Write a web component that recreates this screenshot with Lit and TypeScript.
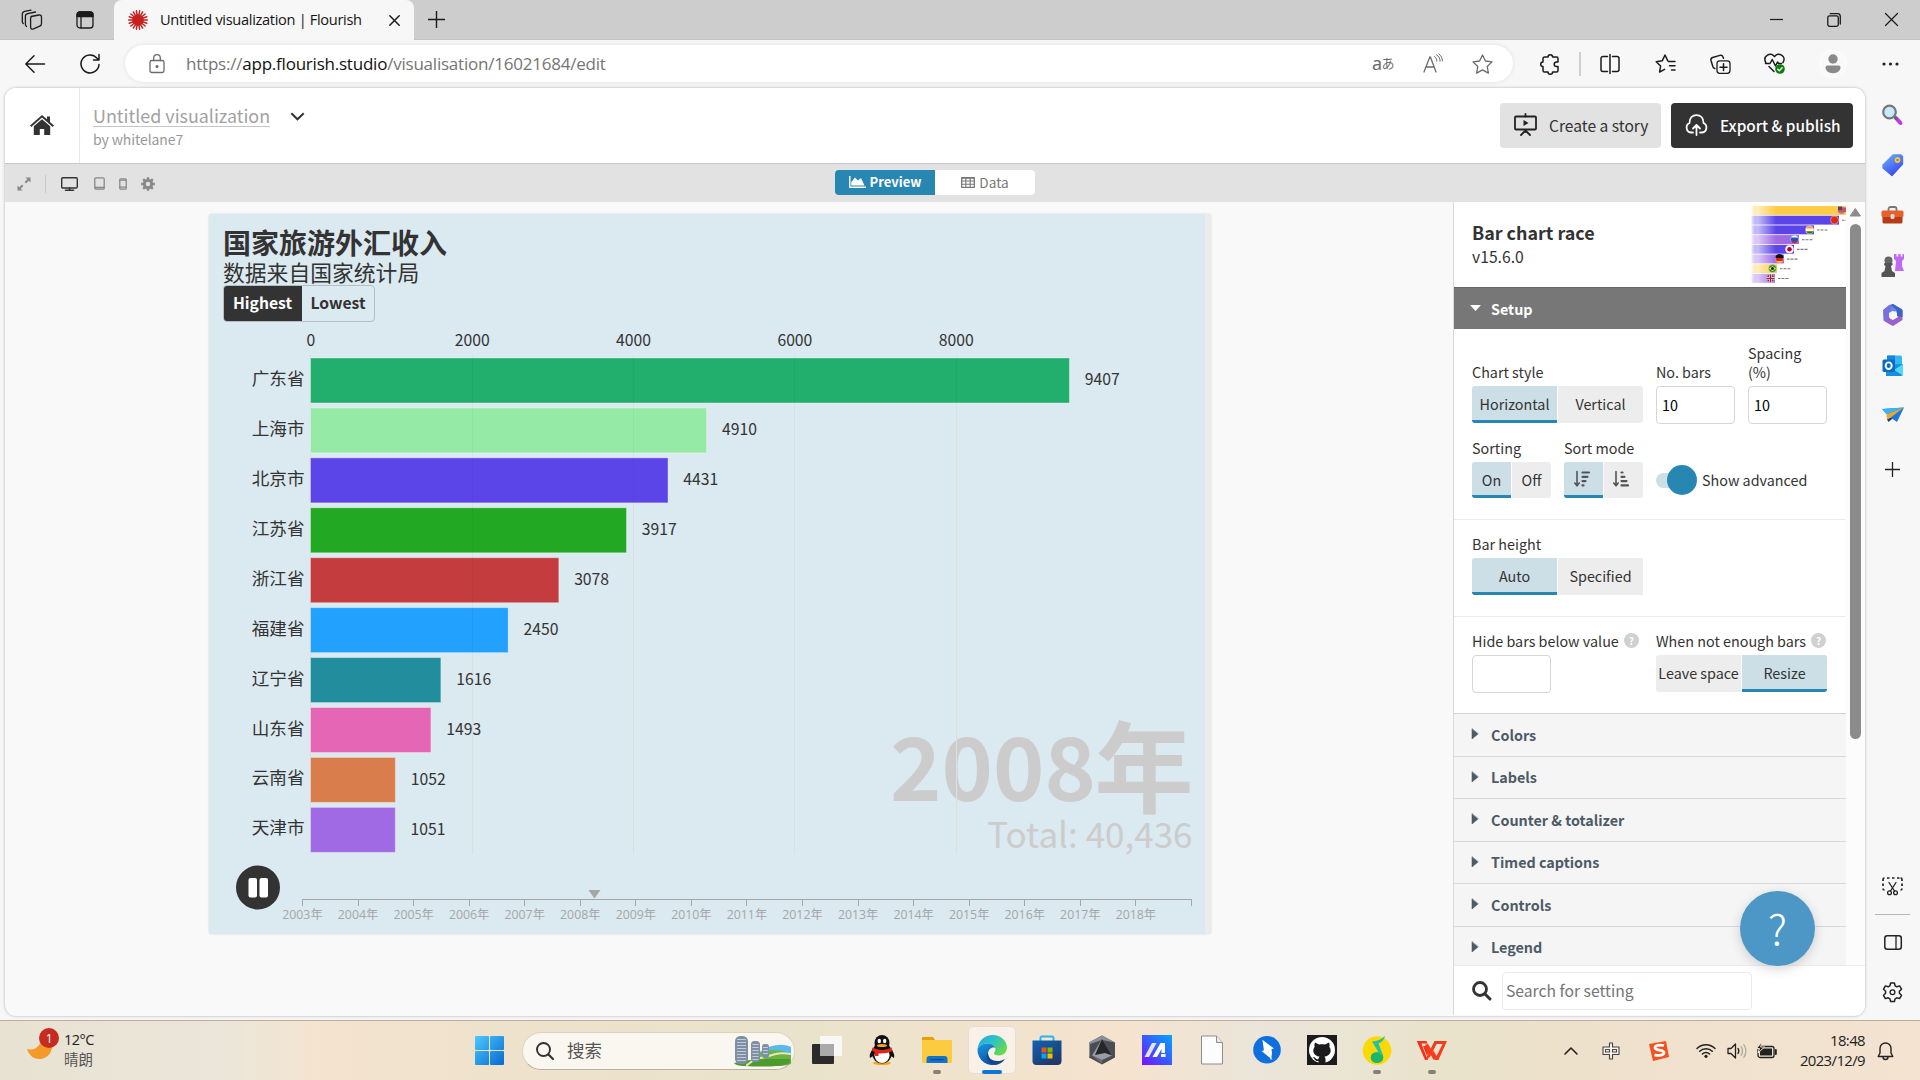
import { LitElement, html, svg, css } from "lit";
import { customElement } from "lit/decorators.js";

const icon = (w: number, h: number, body: unknown, cls = "") =>
  html`<svg class="ic ${cls}" width=${w} height=${h} viewBox="0 0 ${w} ${h}" fill="none" stroke="currentColor" stroke-width="1.3" stroke-linecap="round" stroke-linejoin="round">${body}</svg>`;

const base = css`
  :host { display: block; box-sizing: border-box; }
  *, *::before, *::after { box-sizing: border-box; }
  .ic { display: block; flex: none; overflow: visible; }
  .cell { display: flex; align-items: center; justify-content: center; flex: none; }
`;

/* ---------- browser chrome ---------- */

@customElement("browser-top")
class BrowserTop extends LitElement {
  static styles = [base, css`
    :host { font-family: "Noto Sans", "Open Sans", "Noto Sans CJK SC", sans-serif; color: #1b1b1b; flex: none; }
    .tabs { height: 40px; background: #cdcdcd; display: flex; align-items: stretch; border-bottom: 1px solid #c2c2c2; }
    .left { width: 114px; display: flex; }
    .c-work { width: 64px; } .c-vert { width: 42px; }
    .tab { width: 300px; height: 40px; background: #f7f7f7; border-radius: 8px 8px 0 0; display: flex; align-items: center; padding-left: 14px; }
    .tab-title { font-family: "Open Sans", sans-serif; font-size: 14.6px; letter-spacing: -0.32px; margin: -2px 0 0 12px; width: 229px; line-height: 20px; white-space: nowrap; color: #151515; }
    .plus { width: 44px; }
    .win { margin-left: auto; display: flex; }
    .w57 { width: 57px; } .w58 { width: 58px; }
    .bar { height: 48px; background: #f7f7f7; display: flex; align-items: center; padding: 0 0 1px 7px; }
    .w55 { width: 55px; } .w63 { width: 55px; margin-right: 8px; }
    .addr { width: 1388px; height: 37px; border-radius: 19px; background: #fff; box-shadow: 0 0 4px rgba(0,0,0,.1); display: flex; align-items: center; padding: 0 5px 0 24px; color: #6b6b6b; }
    .url { margin-left: 21px; font-family: "Open Sans", sans-serif; font-size: 17px; letter-spacing: -0.22px; color: #757575; flex: 1; white-space: nowrap; line-height: 24px; }
    .url b { font-weight: 400; color: #111; }
    .aa { width: 52px; font-size: 18px; letter-spacing: -.6px; line-height: 20px; padding-bottom: 2px; }
    .jp { font-size: 13px; font-family: "Noto Sans CJK JP", sans-serif; }
    .w48 { width: 48px; } .w51 { width: 51px; }
    .gap { width: 10px; }
    .w54 { width: 54px; } .sep { width: 2px; height: 24px; background: #cfcfcf; margin: 0 2px; }
    .w53 { width: 53px; } .w60 { width: 60px; } .w62 { width: 62px; }
    .avatar { width: 28px; height: 28px; border-radius: 50%; background: #f9f9f9; border: 1px solid #fff; }
  `];
  render() {
    const rays = Array.from({ length: 18 }, (_, i) => {
      const a = (i * Math.PI) / 9;
      return svg`<line x1="10" y1="10" x2=${10 + 9.3 * Math.cos(a)} y2=${10 + 9.3 * Math.sin(a)} />`;
    });
    return html`
      <div class="tabs">
        <div class="left">
          <div class="cell c-work">${icon(22, 22, svg`<path d="M10 7.500l8-1.500c1.500-.2 2.500.5 2.500 2v6.500c0 1.300-.6 2.200-1.800 2.700l-6.200 2.600c-1.700.6-2.900 0-2.900-1.700V9.500c0-1.200.3-1.800 1.300-2z"/><path d="M5.500 17.500c-.9-.6-1.100-1.300-1.100-2.200V7.300c0-1.500.8-2.300 2.300-2.600L14.500 3M2.300 14.500c-.8-.6-1-1.200-1-2V5.300c0-1.500.8-2.500 2.300-2.900L10 1.100"/>`)}</div>
          <div class="cell c-vert">${icon(18, 18, svg`<rect x="1" y="1" width="16" height="16" rx="3"/><path d="M1 4a3 3 0 0 1 3-3h10a3 3 0 0 1 3 3v1.500H1z" fill="currentColor"/><path d="M5 6v10.500"/>`)}</div>
        </div>
        <div class="tab">
          ${icon(20, 20, svg`<g stroke="#c5221f" stroke-width="1.500">${rays}<circle cx="10" cy="10" r="5" fill="#c5221f"/></g>`)}
          <div class="tab-title">Untitled visualization | Flourish</div>
          ${icon(11, 11, svg`<path d="M.8 .8l9.400 9.400M10.200 .8L.8 10.200" stroke-width="1.500"/>`)}
        </div>
        <div class="cell plus">${icon(17, 17, svg`<path d="M8.500 0v17M0 8.500h17" stroke-width="1.400" stroke-linecap="butt"/>`)}</div>
        <div class="win">
          <div class="cell w57">${icon(13, 13, svg`<path d="M0 6.500h13" stroke-width="1.200" stroke-linecap="butt"/>`)}</div>
          <div class="cell w57">${icon(14, 14, svg`<rect x=".8" y="2.800" width="10.500" height="10.500" rx="1.800"/><path d="M3.300 .7h7.200a2.800 2.800 0 0 1 2.800 2.800v7.500"/>`)}</div>
          <div class="cell w58">${icon(13, 13, svg`<path d="M.5 .5l12 12M12.500 .5l-12 12" stroke-width="1.200"/>`)}</div>
        </div>
      </div>
      <div class="bar">
        <div class="cell w55">${icon(20, 18, svg`<path d="M19.500 9H.8M9 .8L.8 9 9 17.200" stroke-width="1.500"/>`)}</div>
        <div class="cell w63">${icon(20, 22, svg`<path d="M19 11.500A9 9 0 1 1 16.800 5L19 7M19 1.500V7h-5.500" stroke-width="1.500"/>`)}</div>
        <div class="addr">
          ${icon(16, 20, svg`<rect x="1" y="6.500" width="14" height="12" rx="1.800"/><path d="M4.700 6.500V4a3.300 3.300 0 0 1 6.600 0v2.500"/><circle cx="8" cy="12.500" r=".9" fill="currentColor"/>`)}
          <div class="url">https://<b>app.flourish.studio</b>/visualisation/16021684/edit</div>
          <div class="cell aa">a<span class="jp">あ</span></div>
          <div class="cell w48">${icon(20, 19, svg`<path d="M1 18L6.800 3h.6L13 18M3 13h8.200"/><path d="M11.500 2.500c1.500 1 2.300 2.600 2.300 4.600M13.500 .8c2.500 1.500 3.600 3.700 3.600 6.400M15.900 0c2.400 1.600 3.500 4.200 3.500 7" stroke-width="1"/>`)}</div>
          <div class="cell w51">${icon(21, 20, svg`<path d="M10.500 1l2.900 6 6.600.900-4.800 4.600 1.200 6.600-5.900-3.200-5.900 3.200 1.200-6.600L1 7.900 7.600 7z"/>`)}</div>
        </div>
        <div class="gap"></div>
        <div class="cell w54">${icon(20, 20, svg`<path d="M4.500 3H8a2.300 2.300 0 0 1 4.600 0h3.900A1.500 1.500 0 0 1 18 4.500V8h-1.500a2.300 2.300 0 0 0 0 4.600H18v3.900a1.500 1.500 0 0 1-1.500 1.500h-3.900a2.300 2.300 0 0 1-4.600 0H4.500A1.500 1.500 0 0 1 3 16.500v-3.900a2.300 2.300 0 0 1 0-4.600V4.500A1.500 1.500 0 0 1 4.500 3z" stroke-width="1.500"/>`)}</div>
        <div class="sep"></div>
        <div class="cell w53">${icon(20, 20, svg`<path d="M7.500 2.500H3a2 2 0 0 0-2 2v11a2 2 0 0 0 2 2h4.500M12.500 2.500H17a2 2 0 0 1 2 2v11a2 2 0 0 1-2 2h-4.500M10 .5v19" stroke-width="1.500"/>`)}</div>
        <div class="cell w60">${icon(23, 20, svg`<path d="M13.500 7.500h6.500M14.500 11.800H20M16.500 16H20M12.800 6.800L10 1 7.200 6.800l-6 .9 4.400 4.300-1 6 5-2.600" stroke-width="1.500"/>`)}</div>
        <div class="cell w48">${icon(21, 20, svg`<rect x="7" y="6.800" width="13" height="12.600" rx="2.800"/><path d="M13.500 9.800v6.800M10 13.200h7M4.800 14.500c-1-.3-1.500-.8-1.900-1.800L1 6.500C.6 5 1.200 4 2.700 3.500l7.200-2.100c1.500-.4 2.600.2 3.100 1.600l.5 1.300" stroke-width="1.500"/>`)}</div>
        <div class="cell w62">${icon(22, 21, svg`<path d="M2 10C-2 3 7-2 10.500 3.700 14-2 23 3 19 9.500M1.500 10.500H6l2.200-4 3.300 6.500 2-4 1 1.500h3M5 13.500l5 5" stroke-width="1.500"/><circle cx="16" cy="16" r="4.800" fill="#107c10" stroke="none"/><path d="M13.800 16.200l1.600 1.500 2.700-3" stroke="#fff"/>`)}</div>
        <div class="cell w54"><div class="avatar cell">${icon(16, 20, svg`<g fill="#8a8a8a" stroke="none"><circle cx="8" cy="5" r="4.700"/><path d="M.5 13.500a2 2 0 0 1 2-2h11a2 2 0 0 1 2 2c0 3-3 5.700-7.500 5.700S.5 16.500.5 13.500z"/></g>`)}</div></div>
        <div class="cell w60">${icon(17, 4, svg`<g fill="#222" stroke="none"><circle cx="2" cy="2" r="1.600"/><circle cx="8.500" cy="2" r="1.600"/><circle cx="15" cy="2" r="1.600"/></g>`)}</div>
      </div>`;
  }
}

/* ---------- Flourish header and view bar ---------- */

@customElement("editor-header")
class EditorHeader extends LitElement {
  static styles = [base, css`
    :host { font-family: "Noto Sans CJK SC", sans-serif; color: #333; flex: none; }
    .head { height: 76px; background: #fff; border-bottom: 1px solid #c8c8c8; display: flex; align-items: center; }
    .home { width: 75px; height: 75px; border-right: 1px solid #e8e8e8; padding-bottom: 2px; }
    .names { margin-left: 13px; padding-top: 1px; }
    .title { font-size: 17.9px; line-height: 24px; height: 24px; color: #a2a2a2; border-bottom: 1px solid #c4c4c4; white-space: nowrap; }
    .by { font-size: 14px; line-height: 20px; margin-top: 2px; color: #999; letter-spacing: -.1px; }
    .chev { margin: -18px 0 0 20px; }
    .btns { margin-left: auto; display: flex; gap: 10px; padding-right: 12px; }
    .btn { height: 45px; border-radius: 4px; background: #e2e2e2; display: flex; align-items: center; font-size: 15.6px; gap: 12px; line-height: 20px; white-space: nowrap; padding-bottom: 1px; }
    .story { width: 161px; padding-left: 14px; }
    .pub { width: 182px; background: #333; color: #fff; padding-left: 14px; font-weight: 500; font-size: 15.35px; }
    .view { height: 38px; background: #e2e2e2; display: flex; align-items: center; color: #888; }
    .l { width: 830px; display: flex; align-items: center; padding-left: 12px; margin-top: 1px; }
    .vsep { width: 1px; height: 18px; background: #c8c8c8; margin: 0 15px 0 14px; }
    .dark { color: #333; }
    .m1 { margin-left: 16px; } .m2 { margin-left: 14px; } .m3 { margin-left: 14px; }
    .seg { display: flex; height: 25px; margin-top: -1px; font-size: 13.6px; line-height: 20px; border-radius: 4px; overflow: hidden; }
    .seg div { width: 100px; display: flex; align-items: center; justify-content: center; gap: 4px; background: #fff; color: #777; padding-bottom: 1px; }
    .seg .on { background: #2886b2; color: #fff; font-weight: 700; font-size: 13px; }
  `];
  render() {
    return html`
      <div class="head">
        <div class="home cell">${icon(24, 20, svg`<g fill="#333" stroke="none"><path d="M12 0L0 10.500l1.300 1.400L12 2.600l10.700 9.300 1.300-1.400-4-3.500V1.500h-3v2.800z"/><path d="M12 4.200L3.800 11.300V20h6v-6h4.400v6h6v-8.700z"/></g>`)}</div>
        <div class="names">
          <div class="title">Untitled visualization</div>
          <div class="by">by whitelane7</div>
        </div>
        ${icon(15, 9, svg`<path d="M1.300 1.300l6.200 6 6.200-6" stroke-width="2" stroke-linecap="butt" stroke-linejoin="miter"/>`, "chev")}
        <div class="btns">
          <div class="btn story">${icon(23, 22, svg`<g stroke="#222" stroke-width="1.800"><rect x="1" y="2.500" width="21" height="13" rx="1"/><path d="M11.500 0v2.500M11.500 16v2M7 21l4.500-4.500L16 21"/></g><path d="M9.500 6l5 3-5 3z" fill="#222" stroke="none"/>`)}Create a story</div>
          <div class="btn pub">${icon(23, 22, svg`<path d="M8 18.500H6A5 5 0 0 1 4.500 9C4.500 4 7.500 1.200 11.500 1.200S18.500 4 18.500 9A5 5 0 0 1 17 18.500h-2M11.500 21v-9.500M8 14.500l3.500-3.500 3.500 3.500" stroke-width="1.800"/>`)}Export &amp; publish</div>
        </div>
      </div>
      <div class="view">
        <div class="l">
          ${icon(14, 14, svg`<g fill="currentColor" stroke="none"><path d="M8.500 .5H13.500V5.500l-1.800-1.800L9 6.400 7.600 5l2.700-2.700zM5.500 13.500H.5V8.500l1.800 1.800L5 7.600 6.400 9l-2.700 2.700z"/></g>`)}
          <div class="vsep"></div>
          ${icon(17, 14, svg`<rect x=".7" y=".7" width="15.600" height="10.300" rx="1.200" stroke-width="1.400"/><path d="M4.500 13.300h8M8.500 11v2" stroke-width="1.600"/>`, "dark")}
          ${icon(11, 13, svg`<rect x=".8" y=".8" width="9.400" height="11.400" rx="1.200"/><path d="M1 10.500h9"/>`, "m1")}
          ${icon(8, 12, svg`<rect x=".8" y=".8" width="6.400" height="10.400" rx="1.200"/><path d="M1 9.200h6M1 2.200h6"/>`, "m2")}
          ${icon(14, 14, svg`<circle cx="7" cy="7" r="3.700" stroke-width="3"/><path d="M7 .2v2M7 11.800v2M.2 7h2M11.800 7h2M2.200 2.200l1.400 1.400M10.400 10.400l1.400 1.400M2.200 11.800l1.400-1.400M10.400 3.600l1.400-1.400" stroke-width="2.400" stroke-linecap="butt"/>`, "m3")}
        </div>
        <div class="seg">
          <div class="on">${icon(17, 12, svg`<path d="M.8 0v11.300H17" stroke-width="1.400" stroke-linecap="butt" stroke-linejoin="miter"/><path d="M2.300 9.500V6L6 1.500l3 3 3-2.500 3.500 7.500z" fill="#fff" stroke="none"/>`)}Preview</div>
          <div>${icon(14, 11, svg`<rect x=".7" y=".7" width="12.600" height="9.600"/><path d="M1 1.300h12M1 4h12M1 7.200h12M4.800 1v9M9.200 1v9" stroke-width="1.100"/>`)}Data</div>
        </div>
      </div>`;
  }
}

/* ---------- chart ---------- */

const ROWS: [string, number, string][] = [
  ["广东省", 9407, "#22ae6d"], ["上海市", 4910, "#95eaa6"], ["北京市", 4431, "#5b45e8"],
  ["江苏省", 3917, "#23a823"], ["浙江省", 3078, "#c43c3e"], ["福建省", 2450, "#22a1ff"],
  ["辽宁省", 1616, "#228d9c"], ["山东省", 1493, "#e566b4"], ["云南省", 1052, "#da7d4c"], ["天津市", 1051, "#a06ae5"],
];

@customElement("race-chart")
class RaceChart extends LitElement {
  static styles = [base, css`
    :host { width: 1002px; height: 720px; background: #ececec; border-radius: 3px; box-shadow: 0 0 2px rgba(0,0,0,.18); padding-right: 6px; font-family: "Noto Sans CJK SC", sans-serif; color: #333; }
    .stage { height: 720px; background: #dbe9f0; padding: 14px 0 0 14px; }
    h1 { margin: 0; font-size: 28px; line-height: 28px; height: 32px; font-weight: 700; }
    h2 { margin: 0; font-size: 21.800px; line-height: 24px; height: 25px; font-weight: 400; }
    .toggle { display: flex; width: 152px; height: 37px; border: 1px solid #b4bdc2; border-radius: 4px; font-size: 15.700px; font-weight: 700; line-height: 20px; overflow: hidden; }
    .toggle div { flex: 1; padding-bottom: 2px; }
    .toggle .on { flex: 0 0 79px; margin: -1px 0 -1px -1px; background: #333; color: #fff; }
    svg { display: block; margin-left: -14px; }
    .num { font-size: 15.750px; }
    .name { font-size: 17.600px; font-weight: 400; }
    .year { font-family: "Open Sans", "Noto Sans CJK SC", sans-serif; font-size: 12.300px; fill: #a6a6a6; }
    .big { font-weight: 700; font-size: 87.300px; fill: #ccc; }
    .nian { font-weight: 700; font-size: 99px; fill: #ccc; }
    .total { font-size: 35px; fill: #ccc; }
  `];
  render() {
    const x0 = 101.800, k = 0.08068;
    const ticks = [0, 2000, 4000, 6000, 8000];
    return html`<div class="stage">
      <h1>国家旅游外汇收入</h1>
      <h2>数据来自国家统计局</h2>
      <div class="toggle"><div class="on cell">Highest</div><div class="cell">Lowest</div></div>
      <svg width="996" height="611" viewBox="0 322 996 611" fill="#333">
        <text class="big" x="681" y="801">2008</text>
        <text class="nian" x="984.500" y="805" text-anchor="end">年</text>
        <text class="total" x="983.500" y="848" text-anchor="end">Total: 40,436</text>
        ${ticks.map((t) => svg`<rect x=${Math.round(x0 + t * k - 0.5)} y="355" width="1" height="499" fill="#dcdfe0"/>
          <text class="num" x=${x0 + t * k} y="346" text-anchor="middle">${t}</text>`)}
        ${ROWS.map(([n, v, c], i) => {
          const y = 358 + i * 49.93;
          return svg`<rect x=${x0 - 0.3} y=${y} width=${v * k} height="45" fill=${c} stroke="#fff" stroke-opacity=".35"/>
            ${ticks.slice(1).map((t) => (t < v ? svg`<rect x=${Math.round(x0 + t * k - 0.5)} y=${y} width="1" height="45" fill="#000" fill-opacity=".03"/>` : ""))}
            <text class="name" x="95.500" y=${y + 27} text-anchor="end">${n}</text>
            <text class="num" x=${x0 + v * k + 15} y=${y + 27.400}>${v}</text>`;
        })}
        <circle cx="49" cy="887.500" r="22" fill="#333"/>
        <rect x="39.500" y="878" width="8.500" height="19.500" rx="2" fill="#fff"/><rect x="50.500" y="878" width="8.500" height="19.500" rx="2" fill="#fff"/>
        <rect x="93" y="899" width="890" height="1" fill="#a6a6a6"/>
        <path d="M379.500 890h12l-6 8.500z" fill="#a6a6a6"/>
        ${Array.from({ length: 17 }, (_, i) => svg`<rect x=${Math.round(93 + i * 55.56)} y="899" width="1" height="7" fill="#a6a6a6"/>
          ${i < 16 ? svg`<text class="year" x=${93.500 + i * 55.56} y="918.500" text-anchor="middle">${2003 + i}年</text>` : ""}`)}
      </svg>
    </div>`;
  }
}

/* ---------- settings panel ---------- */

@customElement("settings-panel")
class SettingsPanel extends LitElement {
  static styles = [base, css`
    :host { width: 412px; height: 813px; border-left: 1px solid #d9d9d9; background: #fff; font-family: "Noto Sans CJK SC", sans-serif; font-size: 14.350px; line-height: 19px; color: #333; display: flex; flex-direction: column; flex: none; }
    .scroll { height: 763px; display: flex; overflow: hidden; }
    .col { width: 392px; flex: none; }
    .track { width: 19px; background: #fcfcfc; padding: 6px 4px 0; }
    .thumb { margin-top: 7px; height: 515px; width: 11px; border-radius: 6px; background: #8b8b8b; }
    .intro { height: 85px; display: flex; justify-content: space-between; padding: 18px 0 0 18px; }
    .intro b { display: block; font-size: 17.900px; line-height: 24px; }
    .intro span { font-size: 15.700px; line-height: 24px; display: block; margin-top: 1px; }
    .thumbnail { margin-top: -17px; }
    .setup { height: 42px; border-top: 1px solid #666; background: #777; color: #fff; font-weight: 700; display: flex; align-items: center; padding: 0 0 1px 16px; gap: 10px; }
    .box { padding: 0 0 0 18px; border-bottom: 1px solid #ececec; }
    .r { display: flex; align-items: flex-end; }
    .b1 { height: 191px; padding-top: 14px; }
    .b2 { height: 97px; padding-top: 11px; } .b3 { height: 97px; padding-top: 11px; border-color: #d4d4d4; }
    .lab { height: 24px; display: flex; align-items: center; gap: 5px; white-space: nowrap; margin-bottom: 3px; }
    .two { height: 40px; width: 79px; white-space: normal; align-items: flex-start; }
    .segs { display: flex; height: 37px; gap: 1px; border-radius: 3px; overflow: hidden; }
    .s36 { height: 36px; }
    .segs div { width: 85px; background: #ededed; padding-bottom: 2px; white-space: nowrap; }
    .segs.sm div { width: 39px; }
    .segs .on { background: #ccdfe7; border-bottom: 3px solid #2886b2; padding: 1px 0 0; }
    .inp { width: 79px; height: 38px; border: 1px solid #d6d6d6; border-radius: 4px; padding: 8px 0 0 5px; margin-bottom: -1px; color: #000; }
    .g13 { margin-left: 13px; }
    .sort { margin-top: 12px; }
    .adv { margin-left: 13px; display: flex; align-items: center; height: 36px; }
    .sw { width: 41px; height: 30px; display: flex; align-items: center; }
    .sw i { width: 33px; height: 15px; border-radius: 8px; background: #ccdfe7; flex: none; }
    .sw b { width: 30px; height: 30px; border-radius: 50%; background: #2886b2; margin-left: -22px; flex: none; }
    .adv span { margin: -2px 0 0 5px; }
    .q { width: 15px; height: 15px; border-radius: 50%; background: #d0d0d0; color: #fff; font-size: 10px; line-height: 15px; font-weight: 700; }
    .hide { width: 184px; }
    .row { height: 42.500px; background: #f5f5f5; border-bottom: 1px solid #d8d8d8; display: flex; align-items: center; padding: 0 0 1px 18px; gap: 13px; font-weight: 700; color: #4d5b66; }
    .foot { height: 50px; border-top: 1px solid #ececec; display: flex; align-items: center; padding-left: 18px; border-radius: 0 0 10px 0; }
    .search { margin-left: 11px; width: 250px; height: 38px; border: 1px solid #eaeaea; border-radius: 4px; padding: 8px 0 0 3px; color: #757575; font-size: 15.700px; }
  `];
  render() {
    const bars: [string, number, string][] = [["#ffcc45", 95, "#c77"], ["#5b45e8", 88, "#de2910"], ["#5b45e8", 63, "#f93"], ["#a06ae5", 48, "#2454b5"], ["#5b45e8", 43, "#fff"], ["#a06ae5", 33, "#dd1f1f"], ["#ffcc45", 26, "#2c8c3c"], ["#a06ae5", 24, "#33437f"]];
    const seg = (a: string, b: string, on: number) => html`<div class="segs"><div class="cell ${on === 0 ? "on" : ""}">${a}</div><div class="cell ${on === 1 ? "on" : ""}">${b}</div></div>`;
    return html`
      <div class="scroll">
        <div class="col">
          <div class="intro"><div><b>Bar chart race</b><span>v15.6.0</span></div>
            <svg class="thumbnail" width="95" height="80" viewBox="0 0 95 80">
              <defs>${bars.map(([c], i) => svg`<linearGradient id="g${i}" gradientUnits="userSpaceOnUse" x1="0" x2="25" y1="0" y2="0"><stop offset="0" stop-color="#fff"/><stop offset=".25" stop-color=${c} stop-opacity=".35"/><stop offset="1" stop-color=${c}/></linearGradient>`)}</defs>
              ${bars.map(([c, w, f], i) => svg`<rect x="0" y=${3 + i * 9.700} width=${w} height="8.900" fill="url(#g${i})"/>
                <circle cx=${w - 4.500} cy=${7.400 + i * 9.700} r="4" fill=${f} stroke="#fff" stroke-width=".4"/>
                ${i ? svg`<path d="M${w + 3} ${7.600 + i * 9.700}h11" stroke="#777" stroke-width="1.100" stroke-dasharray="2 .5 1 .5"/>` : ""}`)}
              <path d="M87 4.500h8v4.500h-8z" fill="#c55"/><path d="M87 3.500h4v3.500h-4z" fill="#447"/>
              <rect x="55" y="25.500" width="7.500" height="2.500" fill="#fff"/><path d="M55.300 28.500h7a4 4 0 0 1-7 0z" fill="#138808"/>
              <path d="M40 34.500a4 4 0 0 1 7 0z" fill="#fff"/><path d="M40 38.500h7a4 4 0 0 1-7 0z" fill="#d52b1e"/>
              <circle cx="38.500" cy="46.200" r="2.300" fill="#bc002d"/>
              <path d="M24.500 55a4 4 0 0 1 8 0z" fill="#111"/><path d="M25.300 58h6.500a4 4 0 0 1-6.500 0z" fill="#ffce00"/>
              <path d="M18 65.600l3.500-2.600 3.500 2.600-3.500 2.600z" fill="#fedf00"/><circle cx="21.500" cy="65.600" r="1.500" fill="#002776"/>
              <path d="M15.500 75.300h8M19.500 71.300v8" stroke="#fff" stroke-width="2.400"/><path d="M15.500 75.300h8M19.500 71.300v8" stroke="#c8102e" stroke-width="1.300"/>
            </svg>
          </div>
          <div class="setup">${icon(11, 6, svg`<path d="M0 0h11L5.500 6z" fill="#fff" stroke="none"/>`)}Setup</div>
          <div class="box b1">
            <div class="r">
              <div><div class="lab">Chart style</div>${seg("Horizontal", "Vertical", 0)}</div>
              <div class="g13"><div class="lab">No. bars</div><div class="inp">10</div></div>
              <div class="g13"><div class="lab two">Spacing (%)</div><div class="inp">10</div></div>
            </div>
            <div class="r sort">
              <div><div class="lab">Sorting</div><div class="segs sm s36"><div class="cell on">On</div><div class="cell">Off</div></div></div>
              <div class="g13"><div class="lab">Sort mode</div><div class="segs sm s36">
                <div class="cell on">${icon(19, 16, svg`<g stroke="#555"><path d="M3 .5v14M.8 12L3 14.800 5.200 12" stroke-width="1.600"/><path d="M8.500 1.500h6.500M8.500 5.800h5M8.500 10.100h3M8.500 14.400h1" stroke-width="2.200"/></g>`)}</div>
                <div class="cell">${icon(21, 16, svg`<g stroke="#555"><path d="M3 .5v14M.8 12L3 14.800 5.200 12" stroke-width="1.600"/><path d="M8.500 1.500h1M8.500 5.800h3M8.500 10.100h5M8.500 14.400h6.500" stroke-width="2.200"/></g>`)}</div>
              </div></div>
              <div class="adv"><div class="sw"><i></i><b></b></div><span>Show advanced</span></div>
            </div>
          </div>
          <div class="box b2"><div class="lab">Bar height</div>${seg("Auto", "Specified", 0)}</div>
          <div class="box b3"><div class="r">
            <div class="hide"><div class="lab">Hide bars below value <span class="q cell">?</span></div><div class="inp"></div></div>
            <div><div class="lab">When not enough bars <span class="q cell">?</span></div>${seg("Leave space", "Resize", 1)}</div>
          </div></div>
          ${["Colors", "Labels", "Counter & totalizer", "Timed captions", "Controls", "Legend"].map((t) => html`<div class="row">${icon(6, 10, svg`<path d="M0 0v10l6-5z" fill="#4d5b66" stroke="#4d5b66" stroke-width=".6"/>`)}${t}</div>`)}
        </div>
        <div class="track">${icon(11, 9, svg`<path d="M5.500 .8L10.500 8H.5z" fill="#8b8b8b" stroke="#8b8b8b" stroke-width="1"/>`)}<div class="thumb"></div></div>
      </div>
      <div class="foot">${icon(19, 19, svg`<circle cx="8" cy="8" r="6.500" stroke="#333" stroke-width="2.800"/><path d="M13 13l5 5" stroke="#333" stroke-width="3"/>`)}<div class="search">Search for setting</div></div>`;
  }
}

/* ---------- browser sidebar ---------- */

@customElement("side-rail")
class SideRail extends LitElement {
  static styles = [base, css`
    :host { width: 55px; display: flex; flex-direction: column; align-items: center; color: #222; flex: none; padding: 2px 0 3px 0; }
    .cell { height: 50px; width: 55px; }
    .plus { height: 59px; }
    .fill { flex: 1; }
    .cut { height: 40px; }
    hr { width: 35px; height: 1px; background: #b5b5b5; border: 0; margin: 8px 0 2px; }
  `];
  render() {
    return html`
      <div class="cell">${icon(21, 22, svg`<path d="M14 14l4.500 5" stroke="#c238f0" stroke-width="4"/><path d="M12 12.500l2.500 2.500" stroke="#666" stroke-width="2.500"/><circle cx="7.500" cy="8" r="6.300" fill="#c9e8fb" stroke="#75797e" stroke-width="2.200"/>`)}</div>
      <div class="cell">${icon(21, 22, svg`<defs><linearGradient id="t" x1="0" y1="0" x2=".6" y2="1"><stop offset="0" stop-color="#6ab4f5"/><stop offset="1" stop-color="#3c47f2"/></linearGradient></defs><path d="M11 1h8l1.500 1.500V10L10 21.500 1 14V11z" fill="url(#t)" stroke="url(#t)"/><circle cx="15.500" cy="6" r="2" stroke="#f8c73a" stroke-width="1.800" fill="#5575c8"/>`)}</div>
      <div class="cell">${icon(23, 18, svg`<path d="M7.500 5V3a2 2 0 0 1 2-2h4a2 2 0 0 1 2 2v2" stroke="#777" stroke-width="1.800"/><rect x="1.500" y="9" width="20" height="8.500" rx="1.500" fill="#b53c17" stroke="none"/><rect x=".5" y="4.500" width="22" height="6.500" rx="1.500" fill="#e7622b" stroke="none"/><rect x="9.500" y="8" width="4" height="5" rx="1.500" fill="#d8d8d8" stroke="none"/>`)}</div>
      <div class="cell">${icon(23, 23, svg`<g stroke="none"><path d="M13 0h2.500v2.500h1.800V0h2.400v2.500h1.800V0H23v5l-2 2v5l2 5h-9l1-10-2-2z" fill="#c06af4"/><circle cx="7.500" cy="6.500" r="4" fill="#666"/><path d="M3.500 9h8v2l-1.500 1 1 5 3 2v4H.5v-4l3-2 1-5-1.500-1z" fill="#555"/></g>`)}</div>
      <div class="cell">${icon(22, 22, svg`<g stroke="none"><path d="M11 0l9 5v6l-6-4-6 3.500v8L2 15.500V5.500z" fill="#5d8fe8"/><path d="M1 6l6-5 4-1-3.500 7v8.500L11 22 1.500 16.500z" fill="#7b6fe0"/><path d="M20.500 6v10L11 22l-8-4.500 4.500-3.500 3 2 5.500-3V8z" fill="#9a62cc"/><path d="M20.500 6v7L14.500 12V6L9 1l2-1z" fill="#3f62c4"/><path d="M11 6.800l4 2.300v4.400l-4 2.300-4-2.300V9.100z" fill="#f7f7f7"/></g>`)}</div>
      <div class="cell">${icon(22, 21, svg`<g stroke="none"><rect x="5" y=".5" width="15" height="16" rx="1.500" fill="#35b8f1"/><path d="M5 .5h8v8H5z" fill="#1a88d6"/><path d="M4 10l17-1v10a2 2 0 0 1-2 2H4z" fill="#1490df"/><path d="M21 9L12 15l9 5.500z" fill="#50d9ff"/><rect x=".5" y="4.500" width="12.500" height="12.500" rx="1.500" fill="#0a6cc4"/></g><ellipse cx="6.700" cy="10.700" rx="3" ry="3.300" stroke="#fff" stroke-width="1.900"/>`)}</div>
      <div class="cell">${icon(22, 16, svg`<g stroke="none"><path d="M0 2L22 .5 15 15l-5-3.500z" fill="#1d75df"/><path d="M0 2L22 .5 4.500 7.500z" fill="#39b5f2"/><path d="M22 .5L4.500 7.500 5 12.500 8 11z" fill="#f0a62a"/><path d="M5 12.500l4-2 1.500 1-4 3.500z" fill="#163d78"/></g>`)}</div>
      <div class="cell plus">${icon(15, 15, svg`<path d="M7.500 0v15M0 7.500h15" stroke-linecap="butt"/>`)}</div>
      <div class="fill"></div>
      <div class="cell cut">${icon(21, 18, svg`<path d="M1 4V2.500C1 1.500 1.500 1 2.500 1M5 1h2.500M10 1h2.500M15 1h2.500M18.500 1c1 0 1.500.6 1.500 1.500V4M20 6.500V9M1 6.500V9M1 11.500c0 1 .5 1.500 1.500 1.500M20 11.500c0 1-.5 1.500-1.500 1.500" stroke-width="1.700" stroke-linecap="butt"/><path d="M7 5.500l5.500 8.500M14 5.500L8.500 14"/><circle cx="7.500" cy="15.700" r="1.900"/><circle cx="13.500" cy="15.700" r="1.900"/>`)}</div>
      <hr />
      <div class="cell">${icon(18, 15, svg`<rect x=".8" y=".8" width="16.500" height="13.500" rx="2.500" stroke-width="1.500"/><path d="M12 1v13"/>`)}</div>
      <div class="cell">${icon(21, 21, svg`<path d="M8.600 1h3.800l.7 2.800 1.700 1 2.800-.9 1.900 3.300-2.100 2v2.100l2.100 2-1.900 3.300-2.800-.8-1.700 1-.7 2.800H8.600l-.7-2.800-1.700-1-2.800.8-1.900-3.300 2.100-2V9.200l-2.100-2L3.400 3.900l2.800.9 1.700-1z" stroke-width="1.500"/><circle cx="10.500" cy="10.300" r="2.400"/>`)}</div>`;
  }
}

/* ---------- taskbar ---------- */

@customElement("task-bar")
class TaskBar extends LitElement {
  static styles = [base, css`
    :host { height: 60px; border-top: 1px solid #b9ae9b; display: flex; align-items: center; flex: none; color: #222; font-family: "Open Sans", "Noto Sans CJK SC", sans-serif;
      background: linear-gradient(90deg, #e8e2d2 0, #ebe6da 220px, #f4e4cf 320px, #efe2cc 480px, #e9e3cb 790px, #eee3cc 900px, #f5e3ce 1120px, #ebe5da 1260px, #e9e3cb 1450px, #eee1cc 1560px, #f3e3d0 1920px); }
    .weather { width: 475px; display: flex; padding: 0 0 2px 26px; font-size: 14.500px; line-height: 20px; letter-spacing: -.5px; gap: 8px; }
    .dim { color: #555; letter-spacing: 0; font-size: 14.500px; }
    .find { width: 273px; height: 38px; margin: 0 4px 0 18px; border-radius: 19px; background: #faf7f0; border: 1px solid #dcd2c0; border-bottom-color: #b9b0a2; display: flex; align-items: center; padding: 0 2px 0 13px; font-size: 17.500px; line-height: 24px; color: #555; gap: 13px; }
    .grow { flex: 1; margin-top: -2px; }
    .app { width: 55px; height: 59px; display: flex; flex-direction: column; align-items: center; padding-top: 5px; flex: none; }
    .tile { width: 48px; height: 48px; border-radius: 5px; display: flex; align-items: center; justify-content: center; border: 1px solid transparent; flex: none; }
    .active .tile { background: #f9f1e8; border-color: #e8ddd0; }
    .mark { width: 8px; height: 4px; border-radius: 2px; background: #857f76; margin-top: -4px; visibility: hidden; }
    .open .mark { visibility: visible; }
    .active .mark { width: 20px; background: #0a78d4; visibility: visible; }
    .tray { margin-left: auto; display: flex; align-items: center; }
    .t46 { width: 46px; } .t34 { width: 34px; } .t62 { width: 62px; } .t31 { width: 31px; } .t30 { width: 30px; } .t38 { width: 38px; }
    .clock { width: 84px; text-align: right; font-size: 14.900px; line-height: 20px; letter-spacing: -.6px; padding: 0 1px 2px 0; }
    .end { width: 16px; }
    .badge { font-size: 12px; fill: #fff; stroke: none; }
  `];
  render() {
    const tower = (x: number, y: number, w: number, h: number) => svg`<rect x=${x} y=${y} width=${w} height=${h} rx=${w / 2.500} fill="#7d8ea5" stroke="none"/><path d="M${x + w / 2} ${y + 3}V${y + h - 2}" stroke="#c3cdd8" stroke-width=${w * 0.7} stroke-dasharray="1 2" stroke-linecap="butt"/>`;
    const apps: [string, unknown][] = [
      ["idle", svg`<rect x="0" y="9" width="22" height="20" rx="1" fill="#2b2b2b"/><rect x="8" y="1" width="22" height="20" rx="1" fill="#fafafa" fill-opacity=".92"/><path d="M8 9h14v12H8z" fill="#aaa"/>`],
      ["idle", svg`<ellipse cx="15" cy="28" rx="9" ry="2" fill="#f5a81c"/><path d="M6 14c-2 2-4 6-3 9l3-2zM24 14c2 2 4 6 3 9l-3-2z" fill="#111"/><ellipse cx="15" cy="18" rx="10" ry="10.500" fill="#111"/><ellipse cx="15" cy="20.500" rx="7.500" ry="7.500" fill="#fff"/><ellipse cx="15" cy="8" rx="7.500" ry="8" fill="#111"/><ellipse cx="12.300" cy="6" rx="1.700" ry="2.300" fill="#fff"/><ellipse cx="17.700" cy="6" rx="1.700" ry="2.300" fill="#fff"/><ellipse cx="15" cy="10.500" rx="5" ry="1.600" fill="#f5a81c"/><path d="M5.500 12.500q9.500 5 19 0l1 3.500q-6 3-14 2.500v2.500H8v-3.500l-3-2z" fill="#e2231a"/>`],
      ["open", svg`<path d="M0 3a1 1 0 0 1 1-1h10l2 3v5H0z" fill="#e3a008"/><rect x="0" y="5" width="30" height="23" rx="1" fill="#fdcb3f"/><path d="M4.500 28v-4a3 3 0 0 1 3-3h15a3 3 0 0 1 3 3v4z" fill="#1273c8"/><rect x="8.500" y="24" width="13" height="1.300" fill="#0b4f94"/>`],
      ["active", svg`<defs><linearGradient id="e1" x1="0" y1="0" x2="1" y2=".6"><stop offset="0" stop-color="#2aa8e0"/><stop offset=".5" stop-color="#2cc0cc"/><stop offset="1" stop-color="#67d94b"/></linearGradient><linearGradient id="e2" x1="0" y1="0" x2=".5" y2="1"><stop offset="0" stop-color="#1b9ae2"/><stop offset="1" stop-color="#0a4fa5"/></linearGradient></defs><path d="M.5 14C1.500 5.500 8 0 15.500 0 24 0 30 6 30 12.500c0 5-4 8-8 8-3.500 0-5-1.300-5-2.300s1.500-1.500 1.500-4C18.500 11 15 8.500 10.500 8.500 6 8.500 2 10.500.5 14z" fill="url(#e1)"/><path d="M.5 14C2 10.500 6 8.500 10.500 8.500c4 0 7 1.800 7.900 4.500C15 11.500 11 14.500 11 19c0 6 6 10 11 9.500A15 15 0 0 1 .5 14z" fill="url(#e2)"/><path d="M11 18c0 5 4 8 9.500 8 3 0 5-.7 7.500-2.300-2 3.500-5.500 5.800-9.500 6.300C10 29 8 20 11 18z" fill="#114a8b"/>`],
      ["idle", svg`<defs><linearGradient id="st" x1="0" y1="0" x2=".6" y2="1"><stop offset="0" stop-color="#0f63b4"/><stop offset="1" stop-color="#20386b"/></linearGradient></defs><path d="M8.500 7V3a1.500 1.500 0 0 1 1.500-1.500h10A1.500 1.500 0 0 1 21.500 3v4" fill="none" stroke="#28b6f0" stroke-width="2"/><path d="M.5 5.500h29V26a4 4 0 0 1-4 4h-21a4 4 0 0 1-4-4z" fill="url(#st)"/><rect x="9.500" y="12.500" width="5" height="5" fill="#f25022"/><rect x="15.500" y="12.500" width="5" height="5" fill="#7fba00"/><rect x="9.500" y="18.500" width="5" height="5" fill="#00a4ef"/><rect x="15.500" y="18.500" width="5" height="5" fill="#ffb900"/>`],
      ["idle", svg`<path d="M15 .5l13 7v15l-13 7-13-7v-15z" fill="#4a4d52"/><path d="M15 .5l13 7-13-2.500L3 9v12l-1 1.500v-15z" fill="#8b9097"/><path d="M15 4L5 20.500l10 4.500 10-4.500z" fill="#989da4"/><path d="M15 4l10 16.500-7-2.500-10 2z" fill="#25272b"/><path d="M5 20.500l10 8V25z" fill="#6b7076"/>`],
      ["idle", svg`<defs><linearGradient id="ap" x1="1" y1="0" x2="0" y2="1"><stop offset="0" stop-color="#05a5ff"/><stop offset=".55" stop-color="#3c55ff"/><stop offset="1" stop-color="#7a10ff"/></linearGradient></defs><rect width="30" height="30" fill="url(#ap)"/><path d="M10 8h4.500L7 22H2.500z" fill="#fff" fill-opacity=".85"/><path d="M18.500 8H23v10h-3.500v-4L15 22h-4.500z" fill="#fff"/><path d="M19 19h4.500v3H19z" fill="#fff"/>`],
      ["idle", svg`<path d="M4.500 1h15l6 6.500V29h-21z" fill="#fcfcfc" stroke="#8c8c8c"/><path d="M19.500 1v6.500h6" fill="#e8e8e8" stroke="#8c8c8c"/>`],
      ["idle", svg`<circle cx="15" cy="14.700" r="13.800" fill="#0f6fdc"/><path d="M10.500 5l1.500 11h4l3 9.500 1-8-.5-3.500 2.500-.5z" fill="#fff"/><path d="M10.500 5l9.500 8.500-5 1 5.500 10.500-11-9 4-1z" fill="#fff"/>`],
      ["idle", svg`<rect width="30" height="30" fill="#1b1a1c"/><circle cx="15" cy="15" r="13" fill="#fff"/><path d="M8 7.500l4 2c2-.5 4-.5 6 0l4-2c.8 2 .7 3 .3 4.200 3 4 1 9.300-4.800 9.800.8 1 1 2 1 3.500v4h-7v-3c-4 .5-4-3-6-4 3-.5 3 3 6 2 0-1 .3-1.800 1-2.500-5.800-.5-7.800-5.800-4.800-9.800C7.300 10.500 7.200 9.500 8 7.500z" fill="#1b1a1c"/>`],
      ["open", svg`<circle cx="15" cy="15.500" r="14.300" fill="#fcd805"/><ellipse cx="15" cy="22.500" rx="6.300" ry="5.500" fill="#1bb66e"/><path d="M17.500 19L10 6.500C15 6 19.500 4.500 23 1c-.5 3.500-3 6-6.500 7.500L21.300 21z" fill="#22c3a0"/>`],
      ["open", svg`<path d="M0 6h9.500l3 8.500L10 21 6 11l4.500 0L9.500 8.500H3L10.500 25H8.500z" fill="#f7301c"/><path d="M0 6h3.500l7 19H8z" fill="#f7301c"/><path d="M7.500 6h3.500l9 18.500h-3.500z" fill="none"/><path d="M8 9.500l3.500 0 8 15h-3.300L13.500 19 10.500 25H8.200L14 13 17.500 6H30l-8.500 19H18l-3-6.500 1.500-3 3 5.500L25.500 9h-6l-7 14z" fill="#fa3c1e"/><path d="M17.500 6h7l-3 3h-2L16 15z" fill="#d6452a"/>`],
    ];
    return html`
      <div class="weather">
        ${icon(30, 28, svg`<path d="M1 19c5 1.500 10-.5 12.500-4.500.8-1.300 1.200-3 1.200-4.500h12.500C27.500 21 22 29 13.500 29 7 29 3 25 1 19z" fill="#f39a2b" stroke="none"/><circle cx="23" cy="8" r="10" fill="#c52b1f" stroke="none"/><text class="badge" x="19.800" y="12.500">1</text>`)}
        <div>12°C<div class="dim">晴朗</div></div>
      </div>
      ${icon(29, 29, svg`<defs><linearGradient id="w" gradientUnits="userSpaceOnUse" x1="0" y1="0" x2="29" y2="29"><stop offset="0" stop-color="#4cc9fb"/><stop offset="1" stop-color="#0669d2"/></linearGradient></defs><g fill="url(#w)" stroke="none"><rect width="14" height="14" rx="1"/><rect x="15" width="14" height="14" rx="1"/><rect y="15" width="14" height="14" rx="1"/><rect x="15" y="15" width="14" height="14" rx="1"/></g>`)}
      <div class="find">${icon(18, 18, svg`<circle cx="7.500" cy="7.500" r="6.500" stroke="#333" stroke-width="1.900"/><path d="M12.500 12.500l4.500 4.500" stroke="#333" stroke-width="2.200"/>`)}<span class="grow">搜索</span>
        ${icon(58, 32, svg`<path d="M22 20C32 11 46 7 57 12v16c-12 4-30 3-36-1z" fill="#5bb9ec" stroke="none"/><path d="M18 22c12-8 26-9 39-3v10q-8 3-30 2z" fill="#6db33f" stroke="none"/><path d="M0 28c14-4 28-4 56-4v4Q46 33 10 31 2 31 0 28z" fill="#4c9b2e" stroke="none"/><path d="M56 19c-14-3-20 3-30 4-8 1-9 5-13 7" stroke="#e5e7bd" stroke-width="2"/>${tower(1, 1, 13, 28)}${tower(17, 6, 9, 21)}${tower(28, 9, 7, 14)}`)}
      </div>
      ${apps.map(([c, b]) => html`<div class="app ${c}"><div class="tile"><svg class="ic" width="30" height="30" viewBox="0 0 30 30">${b}</svg></div><div class="mark"></div></div>`)}
      <div class="tray">
        <div class="cell t46">${icon(14, 8, svg`<path d="M1 7l6-6 6 6" stroke-width="1.600"/>`)}</div>
        <div class="cell t34">${icon(18, 18, svg`<path d="M7.500 1h3v4h6.500v7.500h-6.500V17h-3v-4.500H1V5h6.500zM3.500 7.500h4v2.500h-4zM10.500 7.500h4v2.500h-4z" fill="#f8f4ec" stroke="#444" stroke-width="1.100"/>`)}</div>
        <div class="cell t62">${icon(20, 20, svg`<path d="M0 3L17 0l3 16L4 20z" fill="#f4511e" stroke="none"/><path d="M15 4.500c-4-1-9-.3-9 2.200 0 3.300 9 1.300 9 4.800 0 2.700-5.500 3.500-9.500 2.300" stroke="#fff" stroke-width="2.800" stroke-linecap="butt"/>`)}</div>
        <div class="cell t31">${icon(20, 15, svg`<path d="M1 5.500a12.500 12.500 0 0 1 18 0M3.700 8.300a8.800 8.800 0 0 1 12.600 0M6.400 11a5 5 0 0 1 7.200 0" stroke-width="1.500"/><circle cx="10" cy="13.300" r="1.600" fill="#222" stroke="none"/>`)}</div>
        <div class="cell t31">${icon(20, 16, svg`<path d="M1 5.500h3L8.500 1v14L4 10.500H1z"/><path d="M11 5.500q1.800 2.500 0 5"/><path d="M14 3.500q3 4.500 0 9M16.800 1.500q4.200 6.500 0 13" stroke="#b1a89a"/>`)}</div>
        <div class="cell t30">${icon(20, 16, svg`<rect x="1" y="3.500" width="16" height="11" rx="2"/><rect x="3" y="5.500" width="12" height="7" fill="#222" stroke="none"/><path d="M18.800 7v4" stroke-width="2"/><path d="M5 -1L-.5 5.500h3L1 10l6.500-6H4z" fill="#222" stroke="#f1e2cf" stroke-width="1"/>`)}</div>
        <div class="clock">18:48<br />2023/12/9</div>
        <div class="cell t38">${icon(17, 18, svg`<path d="M8.500 1a5.500 5.500 0 0 0-5.500 5.500V11L1.200 14.500h14.600L14 11V6.500A5.500 5.500 0 0 0 8.500 1zM6 15a2.500 2.500 0 0 0 5 0" stroke-width="1.400"/>`)}</div>
        <div class="end"></div>
      </div>`;
  }
}

@customElement("app-root")
class AppRoot extends LitElement {
  static styles = [base, css`
    :host { width: 1920px; height: 1080px; display: flex; flex-direction: column; background: #f7f7f7; overflow: hidden; }
    .mid { flex: 1; display: flex; min-height: 0; padding-left: 5px; }
    .page { width: 1860px; height: 928px; border-radius: 11px; overflow: hidden; box-shadow: 0 0 3px rgba(0,0,0,.3); display: flex; flex-direction: column; background: #f9f9f9; position: relative; }
    .body { display: flex; flex: 1; }
    .canvas { flex: 1; padding: 12px 0 0 204px; }
    .help { position: absolute; left: 1735px; top: 803px; width: 75px; height: 75px; border-radius: 50%; background: #4d97c7; box-shadow: 0 3px 12px rgba(0,0,0,.17); display: flex; align-items: center; justify-content: center; color: #fff; font: 300 42px/75px "Noto Sans CJK SC", "Lato", sans-serif; padding-bottom: 4px; }
  `];
  render() {
    return html`
      <browser-top></browser-top>
      <div class="mid">
        <div class="page">
          <editor-header></editor-header>
          <div class="body">
            <div class="canvas"><race-chart></race-chart></div>
            <settings-panel></settings-panel>
          </div>
          <div class="help">?</div>
        </div>
        <side-rail></side-rail>
      </div>
      <task-bar></task-bar>`;
  }
}
